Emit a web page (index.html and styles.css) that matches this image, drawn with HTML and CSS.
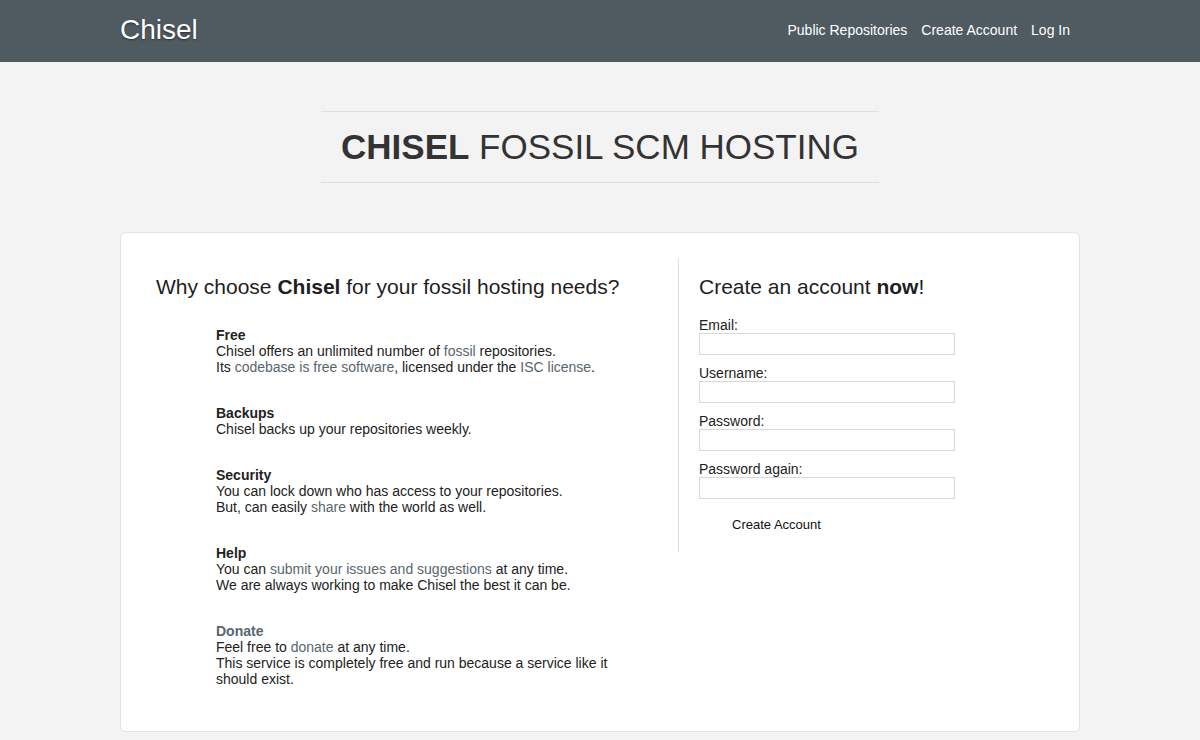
FILE: index.html
```
<!DOCTYPE html>
<html>
<head>
<meta charset="utf-8">
<title>Chisel</title>
<link rel="stylesheet" href="styles.css">
</head>
<body>
<header class="topbar">
  <div class="topbar-inner">
    <a class="logo" href="#">Chisel</a>
    <nav class="nav">
      <a href="#">Public Repositories</a>
      <a href="#">Create Account</a>
      <a href="#">Log In</a>
    </nav>
  </div>
</header>
<main class="main">
  <h1 class="hero"><strong>CHISEL</strong> FOSSIL SCM HOSTING</h1>
  <section class="card">
    <div class="col-left">
      <h2 class="col-title">Why choose <strong>Chisel</strong> for your fossil hosting needs?</h2>
      <ul class="features">
        <li>
          <b>Free</b><br>
          Chisel offers an unlimited number of <a href="#">fossil</a> repositories.<br>
          Its <a href="#">codebase is free software</a>, licensed under the <a href="#">ISC license</a>.
        </li>
        <li>
          <b>Backups</b><br>
          Chisel backs up your repositories weekly.
        </li>
        <li>
          <b>Security</b><br>
          You can lock down who has access to your repositories.<br>
          But, can easily <a href="#">share</a> with the world as well.
        </li>
        <li>
          <b>Help</b><br>
          You can <a href="#">submit your issues and suggestions</a> at any time.<br>
          We are always working to make Chisel the best it can be.
        </li>
        <li>
          <a href="#"><b>Donate</b></a><br>
          Feel free to <a href="#">donate</a> at any time.<br>
          This service is completely free and run because a service like it should exist.
        </li>
      </ul>
    </div>
    <div class="col-right">
      <h2 class="col-title">Create an account <strong>now</strong>!</h2>
      <form class="signup">
        <label>Email:</label>
        <input type="text">
        <label>Username:</label>
        <input type="text">
        <label>Password:</label>
        <input type="password">
        <label>Password again:</label>
        <input type="password">
        <div class="actions"><button type="button">Create Account</button></div>
      </form>
    </div>
  </section>
</main>
</body>
</html>
```
FILE: styles.css
```
html, body {
  margin: 0;
  padding: 0;
}
body {
  background: #f3f3f3;
  font-family: "Liberation Sans", Arial, sans-serif;
  color: #222;
  font-size: 14px;
  line-height: 16px;
}
a {
  color: #58666e;
  text-decoration: none;
}
.topbar {
  background: #4f5a61;
  height: 62px;
}
.topbar-inner {
  width: 960px;
  margin: 0 auto;
  height: 62px;
  display: flex;
  align-items: center;
  justify-content: space-between;
}
.logo {
  color: #fff;
  font-size: 28px;
  line-height: 32px;
  margin-top: -2px;
  text-shadow: 0 1px 2px rgba(0,0,0,0.5);
}
.nav {
  display: flex;
  gap: 14px;
  padding-right: 10px;
  margin-top: -2px;
}
.nav a {
  color: #fff;
  font-size: 14px;
}
.main {
  width: 960px;
  margin: 0 auto;
  padding-top: 49px;
}
.hero {
  width: 558px;
  margin: 0 auto;
  border-top: 1px solid #dedede;
  border-bottom: 1px solid #dedede;
  text-align: center;
  font-size: 35px;
  line-height: 40px;
  padding: 15px 0;
  font-weight: normal;
  color: #333;
}
.hero strong {
  font-weight: bold;
}
.card {
  margin-top: 49px;
  background: #fff;
  border: 1px solid #e4e4e4;
  border-radius: 6px;
  padding: 25px 36px 14px 35px;
  display: flex;
  align-items: flex-start;
}
.col-left {
  width: 522px;
}
.col-title {
  margin: 17px 0 0;
  font-size: 21px;
  line-height: 24px;
  font-weight: normal;
  color: #1e1e1e;
}
.features {
  list-style: none;
  margin: 28px 0 0;
  padding: 0 0 0 60px;
}
.features li {
  margin-bottom: 30px;
  width: 400px;
}
.col-right {
  flex: 1;
  border-left: 1px solid #dedede;
  padding: 0 0 13px 20px;
}
.signup {
  margin-top: 18px;
  display: flex;
  flex-direction: column;
  align-items: flex-start;
}
.signup label {
  font-size: 14px;
  line-height: 16px;
}
.signup input {
  box-sizing: border-box;
  width: 256px;
  height: 22px;
  margin: 0 0 10px;
  border: 1px solid #d8d8d8;
  background: #fff;
  padding: 2px 4px;
  font-family: "Liberation Sans", Arial, sans-serif;
}
.actions {
  margin-top: 2px;
  padding-left: 27px;
}
.actions button {
  font-family: "Liberation Sans", Arial, sans-serif;
  font-size: 13px;
  line-height: 16px;
  background: transparent;
  border: none;
  padding: 6px 6px;
  color: #111;
}
```
